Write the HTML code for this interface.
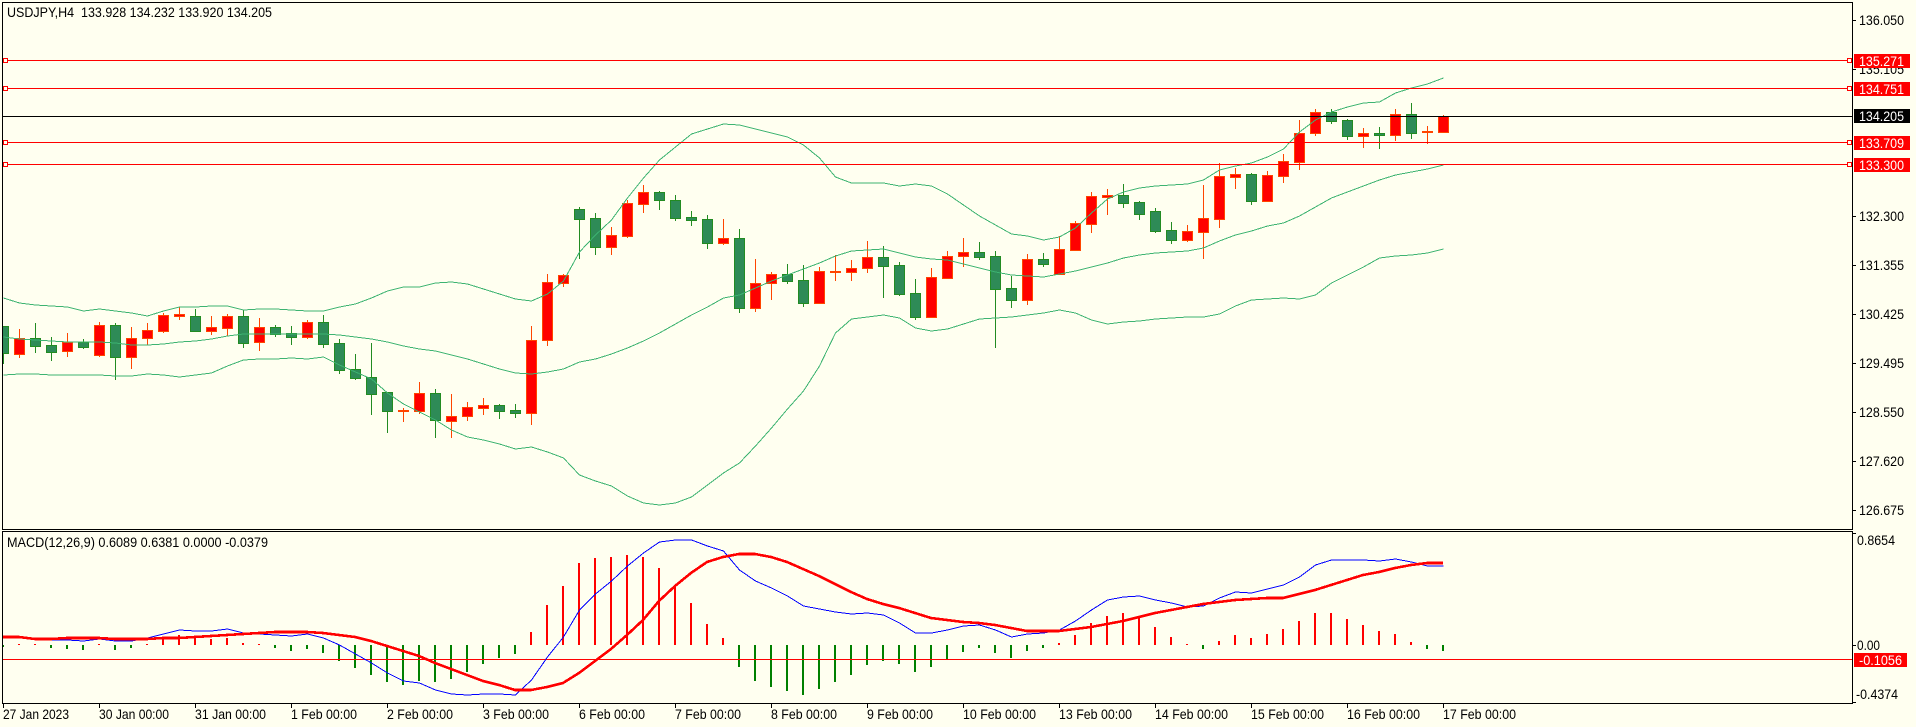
<!DOCTYPE html>
<html><head><meta charset="utf-8"><title>USDJPY,H4</title>
<style>
html,body{margin:0;padding:0;background:#FFFFF0;width:1916px;height:727px;overflow:hidden}
svg{display:block}
text{font-family:"Liberation Sans",sans-serif;font-size:13.6px;fill:#000}
</style></head><body>
<svg width="1916" height="727" viewBox="0 0 1916 727" xmlns="http://www.w3.org/2000/svg">
<rect width="1916" height="727" fill="#FFFFF0"/>
<g shape-rendering="crispEdges" fill="none">
<!-- wicks green -->
<path stroke="#228B22" d="M3.5 326V364M35.5 323V353M51.5 337V361M83.5 339V349M115.5 323V380M195.5 309V332M243.5 310V348M275.5 325V337M291.5 326V345M323.5 315V348M339.5 339V374M355.5 354V380M371.5 343V415M387.5 392V433M435.5 389V438M499.5 404V419M515.5 404V418M579.5 207V259M595.5 213V255M659.5 191V210M675.5 195V221M691.5 211V226M707.5 215V249M739.5 229V313M787.5 264V284M803.5 265V307M883.5 246V298M899.5 262V296M915.5 279V320M979.5 242V260M995.5 251V348M1011.5 276V308M1043.5 253V267M1123.5 184V208M1139.5 201V220M1155.5 208V233M1171.5 222V244M1251.5 173V205M1331.5 109V124M1347.5 119V140M1379.5 127V149M1411.5 103V139"/>
<!-- wicks red -->
<path stroke="#FF4500" d="M19.5 329V358M67.5 333V357M99.5 322V357M131.5 327V369M147.5 323V345M163.5 313V333M179.5 307V320M211.5 316V335M227.5 314V336M259.5 318V351M307.5 320V339M403.5 408V422M419.5 382V414M451.5 394V438M467.5 402V421M483.5 398V415M531.5 326V425M547.5 274V346M563.5 274V287M611.5 227V255M627.5 200V238M643.5 185V213M723.5 219V245M755.5 259V312M771.5 272V300M819.5 267V304M835.5 255V281M851.5 260V281M867.5 241V273M931.5 268V317M947.5 251V279M963.5 238V267M1027.5 254V305M1059.5 236V274M1075.5 221V251M1091.5 192V233M1107.5 189V215M1187.5 225V242M1203.5 185V259M1219.5 163V228M1235.5 168V189M1267.5 171V201M1283.5 154V183M1299.5 120V170M1315.5 109V136M1363.5 128V148M1395.5 109V141M1427.5 126V144M1443.5 115V132"/>
<!-- bodies green -->
<path stroke="#228B22" fill="#2E8B57" d="M2.5 326.5h6V353.5h-6zM30.5 338.5h10V346.5h-10zM46.5 345.5h10V352.5h-10zM78.5 342.5h10V347.5h-10zM110.5 325.5h10V357.5h-10zM190.5 316.5h10V331.5h-10zM238.5 316.5h10V343.5h-10zM270.5 327.5h10V334.5h-10zM286.5 333.5h10V337.5h-10zM318.5 322.5h10V344.5h-10zM334.5 343.5h10V370.5h-10zM350.5 369.5h10V378.5h-10zM366.5 377.5h10V394.5h-10zM382.5 392.5h10V411.5h-10zM430.5 393.5h10V420.5h-10zM494.5 405.5h10V411.5h-10zM510.5 410.5h10V413.5h-10zM574.5 209.5h10V219.5h-10zM590.5 218.5h10V247.5h-10zM654.5 192.5h10V200.5h-10zM670.5 200.5h10V218.5h-10zM686.5 217.5h10V220.5h-10zM702.5 219.5h10V243.5h-10zM734.5 238.5h10V308.5h-10zM782.5 274.5h10V281.5h-10zM798.5 280.5h10V303.5h-10zM878.5 257.5h10V266.5h-10zM894.5 265.5h10V294.5h-10zM910.5 293.5h10V317.5h-10zM974.5 252.5h10V257.5h-10zM990.5 256.5h10V289.5h-10zM1006.5 288.5h10V300.5h-10zM1038.5 259.5h10V264.5h-10zM1118.5 195.5h10V203.5h-10zM1134.5 202.5h10V214.5h-10zM1150.5 211.5h10V231.5h-10zM1166.5 230.5h10V240.5h-10zM1246.5 174.5h10V201.5h-10zM1326.5 112.5h10V121.5h-10zM1342.5 120.5h10V136.5h-10zM1374.5 133.5h10V135.5h-10zM1406.5 114.5h10V133.5h-10z"/>
<!-- bodies red -->
<path stroke="#FF4500" fill="#FF0000" d="M14.5 338.5h10V354.5h-10zM62.5 342.5h10V351.5h-10zM94.5 325.5h10V355.5h-10zM126.5 338.5h10V357.5h-10zM142.5 330.5h10V338.5h-10zM158.5 315.5h10V331.5h-10zM174.5 314.5h10V316.5h-10zM206.5 327.5h10V331.5h-10zM222.5 316.5h10V328.5h-10zM254.5 327.5h10V342.5h-10zM302.5 322.5h10V337.5h-10zM398.5 410.5h10V411.5h-10zM414.5 393.5h10V411.5h-10zM446.5 416.5h10V421.5h-10zM462.5 407.5h10V416.5h-10zM478.5 405.5h10V408.5h-10zM526.5 340.5h10V413.5h-10zM542.5 282.5h10V340.5h-10zM558.5 275.5h10V283.5h-10zM606.5 235.5h10V247.5h-10zM622.5 203.5h10V236.5h-10zM638.5 192.5h10V204.5h-10zM718.5 238.5h10V243.5h-10zM750.5 283.5h10V308.5h-10zM766.5 274.5h10V283.5h-10zM814.5 271.5h10V303.5h-10zM830.5 271.5h10V272.5h-10zM846.5 268.5h10V272.5h-10zM862.5 257.5h10V268.5h-10zM926.5 277.5h10V317.5h-10zM942.5 256.5h10V278.5h-10zM958.5 252.5h10V256.5h-10zM1022.5 259.5h10V300.5h-10zM1054.5 249.5h10V274.5h-10zM1070.5 223.5h10V250.5h-10zM1086.5 196.5h10V224.5h-10zM1102.5 195.5h10V197.5h-10zM1182.5 231.5h10V240.5h-10zM1198.5 218.5h10V232.5h-10zM1214.5 176.5h10V219.5h-10zM1230.5 174.5h10V177.5h-10zM1262.5 175.5h10V201.5h-10zM1278.5 161.5h10V176.5h-10zM1294.5 133.5h10V162.5h-10zM1310.5 112.5h10V133.5h-10zM1358.5 133.5h10V136.5h-10zM1390.5 114.5h10V135.5h-10zM1422.5 131.5h10V132.5h-10zM1438.5 116.5h10V132.5h-10z"/>
<!-- bollinger -->
<g stroke="#3CB371">
<polyline points="3.5,298 19.5,303 35.5,305 51.5,306 67.5,307 83.5,311 99.5,309 115.5,311 131.5,313 147.5,316 163.5,311 179.5,307 195.5,307 211.5,306 227.5,306 243.5,310 259.5,309 275.5,309 291.5,310 307.5,311 323.5,311 339.5,307 355.5,304 371.5,298 387.5,291 403.5,287 419.5,287 435.5,283 451.5,282 467.5,284 483.5,289 499.5,294 515.5,299 531.5,301 547.5,294 563.5,281 579.5,252 595.5,235 611.5,220 627.5,198 643.5,178 659.5,160 675.5,147 691.5,134 707.5,129 723.5,124 739.5,125 755.5,129 771.5,133 787.5,137 803.5,145 819.5,158 835.5,177 851.5,183 867.5,183 883.5,183 899.5,186 915.5,184 931.5,186 947.5,194 963.5,205 979.5,216 995.5,225 1011.5,234 1027.5,236 1043.5,240 1059.5,237 1075.5,228 1091.5,213 1107.5,199 1123.5,192 1139.5,188 1155.5,186 1171.5,185 1187.5,184 1203.5,180 1219.5,170 1235.5,166 1251.5,163 1267.5,157 1283.5,149 1299.5,132 1315.5,120 1331.5,112 1347.5,107 1363.5,103 1379.5,102 1395.5,93 1411.5,88 1427.5,84 1443.5,78"/>
<polyline points="3.5,337 19.5,339 35.5,340 51.5,341 67.5,342 83.5,342 99.5,342 115.5,343 131.5,345 147.5,345 163.5,344 179.5,342 195.5,341 211.5,339 227.5,336 243.5,334 259.5,334 275.5,334 291.5,334 307.5,334 323.5,334 339.5,335 355.5,337 371.5,339 387.5,342 403.5,346 419.5,349 435.5,351 451.5,355 467.5,359 483.5,364 499.5,369 515.5,373 531.5,374 547.5,372 563.5,369 579.5,362 595.5,359 611.5,354 627.5,348 643.5,341 659.5,333 675.5,324 691.5,315 707.5,307 723.5,298 739.5,295 755.5,288 771.5,281 787.5,275 803.5,269 819.5,263 835.5,256 851.5,251 867.5,250 883.5,249 899.5,253 915.5,257 931.5,259 947.5,260 963.5,264 979.5,268 995.5,272 1011.5,275 1027.5,276 1043.5,277 1059.5,274 1075.5,271 1091.5,267 1107.5,263 1123.5,258 1139.5,255 1155.5,253 1171.5,252 1187.5,251 1203.5,248 1219.5,241 1235.5,235 1251.5,231 1267.5,226 1283.5,223 1299.5,216 1315.5,207 1331.5,198 1347.5,192 1363.5,186 1379.5,180 1395.5,175 1411.5,172 1427.5,169 1443.5,165"/>
<polyline points="3.5,375 19.5,374 35.5,374 51.5,375 67.5,375 83.5,375 99.5,375 115.5,376 131.5,376 147.5,374 163.5,375 179.5,377 195.5,375 211.5,373 227.5,366 243.5,360 259.5,359 275.5,359 291.5,358 307.5,359 323.5,357 339.5,365 355.5,372 371.5,379 387.5,393 403.5,404 419.5,412 435.5,420 451.5,430 467.5,437 483.5,440 499.5,444 515.5,449 531.5,447 547.5,452 563.5,458 579.5,475 595.5,481 611.5,486 627.5,496 643.5,503 659.5,505 675.5,503 691.5,497 707.5,485 723.5,473 739.5,463 755.5,446 771.5,428 787.5,409 803.5,391 819.5,366 835.5,333 851.5,319 867.5,317 883.5,315 899.5,318 915.5,328 931.5,331 947.5,329 963.5,324 979.5,319 995.5,318 1011.5,317 1027.5,315 1043.5,313 1059.5,310 1075.5,313 1091.5,320 1107.5,324 1123.5,322 1139.5,321 1155.5,319 1171.5,318 1187.5,317 1203.5,317 1219.5,314 1235.5,306 1251.5,300 1267.5,299 1283.5,298 1299.5,299 1315.5,295 1331.5,283 1347.5,275 1363.5,267 1379.5,258 1395.5,256 1411.5,255 1427.5,253 1443.5,249"/>
</g>
<!-- horizontal lines -->
<path stroke="#FF0000" d="M3 60.5H1852M3 88.5H1852M3 142.5H1852M3 164.5H1852"/>
<path stroke="#000" d="M3 116.5H1852"/>
<path stroke="#FF0000" fill="#FFFFF0" d="M3.5 58.5h4v4h-4zM3.5 86.5h4v4h-4zM3.5 140.5h4v4h-4zM3.5 162.5h4v4h-4zM1847.5 58.5h4v4h-4zM1847.5 86.5h4v4h-4zM1847.5 140.5h4v4h-4zM1847.5 162.5h4v4h-4z"/>
<!-- macd histogram -->
<path stroke="#FF0000" stroke-width="2" d="M19 645V644M35 645V644M99 645V644M147 645V644M163 645V639M179 645V635M195 645V637M211 645V639M227 645V638M243 645V643M259 645V644M531 645V632M547 645V605M563 645V586M579 645V563M595 645V558M611 645V557M627 645V555M643 645V557M659 645V568M675 645V586M691 645V603M707 645V624M723 645V638M1059 645V643M1075 645V635M1091 645V623M1107 645V616M1123 645V613M1139 645V618M1155 645V627M1171 645V637M1187 645V644M1219 645V641M1235 645V635M1251 645V638M1267 645V634M1283 645V629M1299 645V621M1315 645V613M1331 645V613M1347 645V619M1363 645V625M1379 645V631M1395 645V634M1411 645V642"/>
<path stroke="#008000" stroke-width="2" d="M3 645V647M51 645V648M67 645V649M83 645V650M115 645V650M131 645V648M275 645V648M291 645V651M307 645V649M323 645V653M339 645V661M355 645V668M371 645V675M387 645V682M403 645V685M419 645V681M435 645V682M451 645V679M467 645V672M483 645V664M499 645V658M515 645V654M739 645V667M755 645V681M771 645V687M787 645V691M803 645V695M819 645V689M835 645V682M851 645V675M867 645V665M883 645V661M899 645V664M915 645V672M931 645V667M947 645V659M963 645V652M979 645V648M995 645V653M1011 645V658M1027 645V651M1043 645V648M1203 645V649M1427 645V649M1443 645V651"/>
<path stroke="#FF0000" d="M3 659.5H1852"/>
<polyline stroke="#0000FF" points="3.5,636 19.5,637 35.5,638 51.5,640 67.5,640 83.5,641 99.5,639 115.5,641 131.5,641 147.5,638 163.5,634 179.5,630 195.5,631 211.5,631 227.5,629 243.5,633 259.5,634 275.5,635 291.5,636 307.5,634 323.5,638 339.5,645 355.5,654 371.5,663 387.5,673 403.5,681 419.5,683 435.5,690 451.5,694 467.5,695 483.5,694 499.5,694 515.5,695 531.5,680 547.5,657 563.5,637 579.5,610 595.5,594 611.5,581 627.5,566 643.5,553 659.5,542 675.5,540 691.5,540 707.5,546 723.5,551 739.5,570 755.5,581 771.5,588 787.5,596 803.5,606 819.5,609 835.5,612 851.5,614 867.5,613 883.5,615 899.5,623 915.5,633 931.5,633 947.5,630 963.5,626 979.5,625 995.5,630 1011.5,637 1027.5,634 1043.5,633 1059.5,630 1075.5,621 1091.5,610 1107.5,600 1123.5,597 1139.5,596 1155.5,600 1171.5,603 1187.5,607 1203.5,606 1219.5,598 1235.5,592 1251.5,593 1267.5,589 1283.5,585 1299.5,577 1315.5,565 1331.5,560 1347.5,560 1363.5,560 1379.5,561 1395.5,559 1411.5,562 1427.5,566 1443.5,566"/>
<polyline stroke="#FF0000" stroke-width="2.6" points="3,637 19,637 35,639 51,639 67,638 83,638 99,638 115,639 131,639 147,639 163,638 179,638 195,637 211,636 227,635 243,634 259,633 275,632 291,632 307,632 323,633 339,635 355,637 371,641 387,646 403,651 419,656 435,663 451,669 467,675 483,681 499,685 515,690 531,690 547,687 563,683 579,673 595,661 611,649 627,635 643,620 659,601 675,586 691,573 707,562 723,557 739,554 755,554 771,557 787,562 803,569 819,576 835,584 851,592 867,599 883,604 899,608 915,613 931,618 947,620 963,622 979,623 995,625 1011,628 1027,631 1043,631 1059,631 1075,629 1091,627 1107,624 1123,621 1139,617 1155,613 1171,610 1187,607 1203,604 1219,602 1235,600 1251,599 1267,598 1283,598 1299,594 1315,590 1331,585 1347,580 1363,575 1379,572 1395,568 1411,565 1427,563 1443,563"/>
<!-- frames -->
<path stroke="#000" d="M2 2.5H1853M2.5 2V530M2 529.5H1853M1852.5 2V530M2 531.5H1853M2.5 531V704M2 703.5H1853M1852.5 531V704"/>
<!-- ticks -->
<path stroke="#000" d="M1853 20.5h3M1853 69.5h3M1853 216.5h3M1853 265.5h3M1853 314.5h3M1853 363.5h3M1853 412.5h3M1853 461.5h3M1853 510.5h3M1853 533.5h3M1853 645.5h3M1853 702.5h3M3.5 704v4M99.5 704v4M195.5 704v4M291.5 704v4M387.5 704v4M483.5 704v4M579.5 704v4M675.5 704v4M771.5 704v4M867.5 704v4M963.5 704v4M1059.5 704v4M1155.5 704v4M1251.5 704v4M1347.5 704v4M1443.5 704v4"/>
</g>
<!-- chart titles -->
<text x="7" y="17" textLength="265" lengthAdjust="spacingAndGlyphs" xml:space="preserve">USDJPY,H4  133.928 134.232 133.920 134.205</text>
<text x="7" y="547" textLength="261" lengthAdjust="spacingAndGlyphs">MACD(12,26,9) 0.6089 0.6381 0.0000 -0.0379</text>
<!-- price axis -->
<g>
<text x="1859" y="25" textLength="45" lengthAdjust="spacingAndGlyphs">136.050</text>
<text x="1859" y="74" textLength="45" lengthAdjust="spacingAndGlyphs">135.105</text>
<text x="1859" y="221" textLength="45" lengthAdjust="spacingAndGlyphs">132.300</text>
<text x="1859" y="270" textLength="45" lengthAdjust="spacingAndGlyphs">131.355</text>
<text x="1859" y="319" textLength="45" lengthAdjust="spacingAndGlyphs">130.425</text>
<text x="1859" y="368" textLength="45" lengthAdjust="spacingAndGlyphs">129.495</text>
<text x="1859" y="417" textLength="45" lengthAdjust="spacingAndGlyphs">128.550</text>
<text x="1859" y="466" textLength="45" lengthAdjust="spacingAndGlyphs">127.620</text>
<text x="1859" y="515" textLength="45" lengthAdjust="spacingAndGlyphs">126.675</text>
<text x="1857" y="545" textLength="38" lengthAdjust="spacingAndGlyphs">0.8654</text>
<text x="1857" y="650" textLength="23" lengthAdjust="spacingAndGlyphs">0.00</text>
<text x="1856" y="699" textLength="42" lengthAdjust="spacingAndGlyphs">-0.4374</text>
</g>
<!-- price labels -->
<g shape-rendering="crispEdges">
<rect x="1854" y="54" width="56" height="14" fill="#FF0000"/>
<rect x="1854" y="82" width="56" height="14" fill="#FF0000"/>
<rect x="1854" y="109" width="56" height="14" fill="#000"/>
<rect x="1854" y="136" width="56" height="14" fill="#FF0000"/>
<rect x="1854" y="158" width="56" height="14" fill="#FF0000"/>
<rect x="1854" y="653" width="53" height="14" fill="#FF0000"/>
</g>
<g>
<text style="fill:#fff" x="1859" y="66" textLength="45" lengthAdjust="spacingAndGlyphs">135.271</text>
<text style="fill:#fff" x="1859" y="94" textLength="45" lengthAdjust="spacingAndGlyphs">134.751</text>
<text style="fill:#fff" x="1859" y="121" textLength="45" lengthAdjust="spacingAndGlyphs">134.205</text>
<text style="fill:#fff" x="1859" y="148" textLength="45" lengthAdjust="spacingAndGlyphs">133.709</text>
<text style="fill:#fff" x="1859" y="170" textLength="45" lengthAdjust="spacingAndGlyphs">133.300</text>
<text style="fill:#fff" x="1859" y="665" textLength="43" lengthAdjust="spacingAndGlyphs">-0.1056</text>
</g>
<!-- time axis -->
<g>
<text x="3" y="719" textLength="66" lengthAdjust="spacingAndGlyphs">27 Jan 2023</text>
<text x="99" y="719" textLength="70" lengthAdjust="spacingAndGlyphs">30 Jan 00:00</text>
<text x="195" y="719" textLength="71" lengthAdjust="spacingAndGlyphs">31 Jan 00:00</text>
<text x="291" y="719" textLength="66" lengthAdjust="spacingAndGlyphs">1 Feb 00:00</text>
<text x="387" y="719" textLength="66" lengthAdjust="spacingAndGlyphs">2 Feb 00:00</text>
<text x="483" y="719" textLength="66" lengthAdjust="spacingAndGlyphs">3 Feb 00:00</text>
<text x="579" y="719" textLength="66" lengthAdjust="spacingAndGlyphs">6 Feb 00:00</text>
<text x="675" y="719" textLength="66" lengthAdjust="spacingAndGlyphs">7 Feb 00:00</text>
<text x="771" y="719" textLength="66" lengthAdjust="spacingAndGlyphs">8 Feb 00:00</text>
<text x="867" y="719" textLength="66" lengthAdjust="spacingAndGlyphs">9 Feb 00:00</text>
<text x="963" y="719" textLength="73" lengthAdjust="spacingAndGlyphs">10 Feb 00:00</text>
<text x="1059" y="719" textLength="73" lengthAdjust="spacingAndGlyphs">13 Feb 00:00</text>
<text x="1155" y="719" textLength="73" lengthAdjust="spacingAndGlyphs">14 Feb 00:00</text>
<text x="1251" y="719" textLength="73" lengthAdjust="spacingAndGlyphs">15 Feb 00:00</text>
<text x="1347" y="719" textLength="73" lengthAdjust="spacingAndGlyphs">16 Feb 00:00</text>
<text x="1443" y="719" textLength="73" lengthAdjust="spacingAndGlyphs">17 Feb 00:00</text>
</g>
</svg>
</body></html>
